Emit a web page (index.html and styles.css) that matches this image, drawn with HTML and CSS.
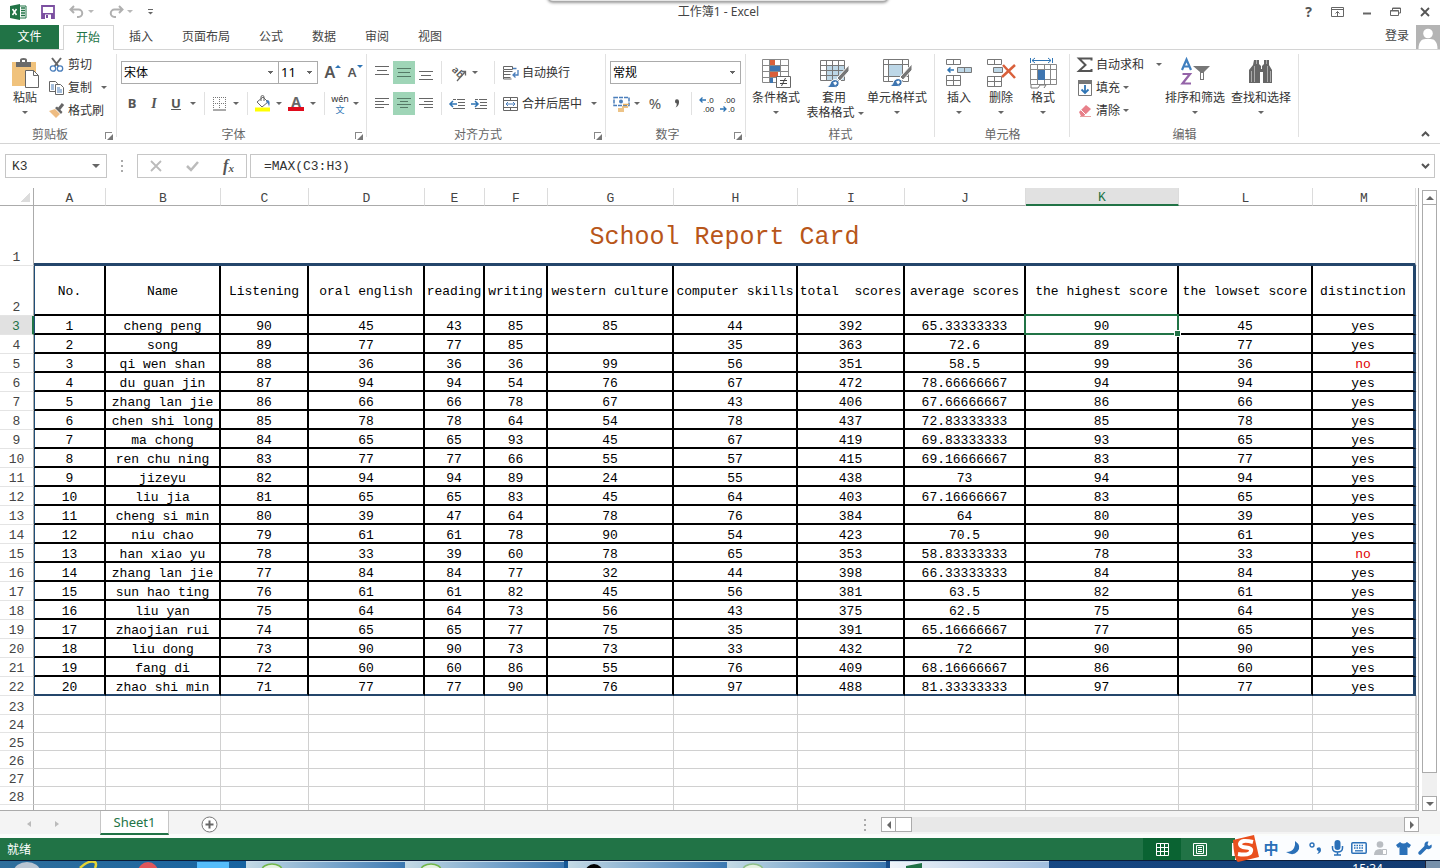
FILE: index.html
```html
<!DOCTYPE html>
<html lang="zh-CN">
<head>
<meta charset="utf-8">
<title>工作簿1 - Excel</title>
<link rel="stylesheet" href="styles.css">
</head>
<body>
<div class="app">
<header class="titlebar">
  <div class="quick">
    <svg class="app-logo" width="17" height="16" viewBox="0 0 17 16"><path d="M0 2 10 0v16L0 14z" fill="#217346"/><path d="M10 2h6v12h-6" fill="#fff" stroke="#217346"/><path d="M11 4h4M11 6.500h4M11 9h4M11 11.500h4" stroke="#217346" stroke-width="1.400"/><path d="m2.500 5 4 6M6.500 5l-4 6" stroke="#fff" stroke-width="1.500"/></svg>
    <button aria-label="保存"><svg width="14" height="14" viewBox="0 0 14 14"><path d="M1 1h12v12H1z" fill="#fff" stroke="#7b4fa0" stroke-width="1.800"/><path d="M1 8h12v5H1z" fill="#7b4fa0"/><path d="M4 9.500h6V14H4z" fill="#fff"/><path d="M5 10h2v3H5z" fill="#7b4fa0"/></svg></button>
    <button class="split" aria-label="撤消"><svg width="16" height="14" viewBox="0 0 16 14"><path d="M5 1 1.500 4.500 5 8M2 4.500h7.500a3.700 3.700 0 0 1 0 7.500H8" fill="none" stroke="#b0b0b0" stroke-width="2"/></svg><i class="caret pale"></i></button>
    <button class="split" aria-label="恢复"><svg width="16" height="14" viewBox="0 0 16 14"><path d="M11 1l3.500 3.500L11 8M14 4.500H6.500a3.700 3.700 0 0 0 0 7.500H8" fill="none" stroke="#b0b0b0" stroke-width="2"/></svg><i class="caret pale"></i></button>
    <button aria-label="自定义快速访问工具栏"><svg width="7" height="6" viewBox="0 0 7 6"><path d="M1 .5h5" stroke="#666"/><path d="M1 3h5L3.500 5.500z" fill="#666"/></svg></button>
  </div>
  <h1>工作簿1 - Excel</h1>
  <div class="window-buttons">
    <button class="help" aria-label="帮助">?</button>
    <button aria-label="功能区显示选项"><svg width="13" height="10" viewBox="0 0 13 10"><path d="M.5.5h12v9H.5zM.5 2.500h12M6.500 9V4.500M4.500 6.500l2-2 2 2" fill="none" stroke="#666"/></svg></button>
    <button aria-label="最小化"><svg width="10" height="10" viewBox="0 0 10 10"><path d="M1 6.500h8" stroke="#666" stroke-width="2"/></svg></button>
    <button aria-label="还原"><svg width="11" height="10" viewBox="0 0 11 10"><path d="M2.500 3V1h8v5h-2M.5 3.500h8v5h-8zM.5 4h8M2.500 1.500h8" fill="none" stroke="#666"/></svg></button>
    <button aria-label="关闭"><svg width="10" height="10" viewBox="0 0 10 10"><path d="m1 1 8 8M9 1 1 9" stroke="#555" stroke-width="1.800"/></svg></button>
  </div>
  <div class="drawer"></div>
</header>

<nav class="tabs">
  <button class="file">文件</button>
  <button class="active">开始</button>
  <button>插入</button>
  <button>页面布局</button>
  <button>公式</button>
  <button>数据</button>
  <button>审阅</button>
  <button>视图</button>
  <a class="login" href="#login">登录</a>
  <svg class="avatar" width="24" height="24" viewBox="0 0 24 24"><path d="M0 0h24v24H0z" fill="#b4b4b4"/><circle cx="12" cy="8.500" r="4.800" fill="#fff"/><path d="M2.500 24c0-7 3-10 7-10h5c4 0 7 3 7 10z" fill="#fff"/></svg>
</nav>

<section class="ribbon">
  <div class="group clipboard">
    <div class="body">
      <button class="big"><svg width="30" height="32" viewBox="0 0 30 32"><path d="M2 4h24v24H2z" fill="#f0c27c"/><path d="M6 4h4V2q0-2 3.500-2T17 2v2h4v5H6z" fill="#6a6a6a"/><path d="M12 2h3v2h-3z" fill="#fff"/><path d="M15.500 12.500h8l5 5v12h-13z" fill="#fff" stroke="#666"/><path d="M23.500 12.500v5h5" fill="none" stroke="#666"/></svg>粘贴<i class="caret"></i></button>
      <div class="stack">
        <button><svg width="16" height="16" viewBox="0 0 16 16"><path d="m3 1 7 9M12 1 5 10" stroke="#666" stroke-width="2"/><circle cx="4" cy="11.500" r="2.700" fill="#fff" stroke="#4a7ebb" stroke-width="1.300"/><circle cx="11" cy="11.500" r="2.700" fill="#fff" stroke="#4a7ebb" stroke-width="1.300"/></svg>剪切</button>
        <button class="spread"><svg width="16" height="16" viewBox="0 0 16 16"><path d="M.5 1.500h6l2 2v8h-8z" fill="#fff" stroke="#666"/><path d="M6.500 4.500h5l3 3v7h-8z" fill="#fff" stroke="#666"/><path d="M2 5h3M2 7h3M2 9h3M8 8h3M8 10h5M8 12h5" stroke="#4a7ebb"/></svg>复制<i class="caret"></i></button>
        <button><svg width="16" height="16" viewBox="0 0 16 16"><path d="m0 8 6-2 5 5-4 4z" fill="#eebc82"/><path d="m6 5 6 6 1.500-2L8 3.500z" fill="#666"/><path d="m10 6 4-5" stroke="#666" stroke-width="3"/></svg>格式刷</button>
      </div>
    </div>
    <div class="caption">剪贴板<button class="launcher" aria-label="剪贴板选项"></button></div>
  </div>

  <div class="group font">
    <div class="body rows">
      <div class="row">
        <select class="font-name" aria-label="字体"><option>宋体</option></select>
        <select class="font-size" aria-label="字号"><option>11</option></select>
        <button class="w22 letter grow" aria-label="增大字号">A<i class="up"></i></button>
        <button class="w22 letter shrink" aria-label="减小字号">A<i class="down"></i></button>
      </div>
      <div class="row">
        <button class="w22 letter" aria-label="加粗"><b>B</b></button>
        <button class="w22 letter" aria-label="倾斜"><em>I</em></button>
        <button class="w22 letter" aria-label="下划线"><u>U</u></button>
        <button class="w12" aria-label="下划线样式"><i class="caret"></i></button>
        <span class="sep"></span>
        <button class="w20" aria-label="边框"><svg width="14" height="14" viewBox="0 0 14 14"><path d="M.5 0v12M6.500 0v12M12.500 0v12M0 .5h13M0 6.500h13" stroke="#777" stroke-dasharray="1 1"/><path d="M0 13h13" stroke="#555"/></svg></button>
        <button class="w12" aria-label="边框样式"><i class="caret"></i></button>
        <span class="sep"></span>
        <button class="w20" aria-label="填充颜色"><svg width="18" height="17" viewBox="0 0 18 17"><path d="m3 7 6-5 5 5-6 5z" fill="#fff" stroke="#666"/><path d="M7 6V2q0-1.500 1.500-1.500T10 2v4" fill="none" stroke="#666"/><path d="M13 5q4 0 2 7-.500-4-3-5z" fill="#4a7ebb"/><path d="M1 12.500h15v4H1z" fill="#ff0"/></svg></button>
        <button class="w12" aria-label="更多填充颜色"><i class="caret"></i></button>
        <button class="w22 font-color" aria-label="字体颜色">A</button>
        <button class="w12" aria-label="更多字体颜色"><i class="caret"></i></button>
        <span class="sep"></span>
        <button class="w20 pinyin" aria-label="拼音"><span>wén</span><span>文</span></button>
        <button class="w12" aria-label="拼音选项"><i class="caret"></i></button>
      </div>
    </div>
    <div class="caption">字体<button class="launcher" aria-label="字体选项"></button></div>
  </div>

  <div class="group align">
    <div class="body rows">
      <div class="row">
        <button class="w22" aria-label="顶端对齐"><svg width="15" height="14" viewBox="0 0 15 14"><path d="M0 .5h14M2 4.500h10M0 8.500h14" stroke="#666"/></svg></button>
        <button class="w22 on" aria-label="垂直居中"><svg width="15" height="14" viewBox="0 0 15 14"><path d="M0 2.500h14M1 6.500h12M0 10.500h14" stroke="#557a66"/></svg></button>
        <button class="w22" aria-label="底端对齐"><svg width="15" height="14" viewBox="0 0 15 14"><path d="M0 5.500h14M2 9.500h10M0 13.500h14" stroke="#666"/></svg></button>
        <span class="sep narrow"></span>
        <button class="w44" aria-label="方向"><svg width="18" height="18" viewBox="0 0 18 18"><text class="tilt" x="1" y="7" transform="rotate(45 2 7)">ab</text><path d="m7 17 8-9M11.500 7.500H15.500V11.500" fill="none" stroke="#666" stroke-width="1.300"/></svg><i class="caret"></i></button>
        <span class="sep narrow"></span>
        <button class="wide"><svg width="16" height="16" viewBox="0 0 16 16"><path d="M.5 1.500h9v3h-9zM.5 6.500h9M.5 9.500h7M.5 12.500h7M.5 5v9h8" fill="none" stroke="#666"/><path d="M10 3.500h3.500M15 5v5H10M12.500 7.500 10 10l2.500 2.500" fill="none" stroke="#4a7ebb" stroke-width="1.300"/></svg>自动换行</button>
      </div>
      <div class="row">
        <button class="w22" aria-label="左对齐"><svg width="15" height="14" viewBox="0 0 15 14"><path d="M0 1.500h14M0 4.500h9M0 7.500h14M0 10.500h9" stroke="#666"/></svg></button>
        <button class="w22 on" aria-label="居中"><svg width="15" height="14" viewBox="0 0 15 14"><path d="M0 1.500h14M3 4.500h8M0 7.500h14M3 10.500h8" stroke="#557a66"/></svg></button>
        <button class="w22" aria-label="右对齐"><svg width="15" height="14" viewBox="0 0 15 14"><path d="M0 1.500h14M5 4.500h9M0 7.500h14M5 10.500h9" stroke="#666"/></svg></button>
        <span class="sep narrow"></span>
        <button class="w22" aria-label="减少缩进"><svg width="16" height="12" viewBox="0 0 16 12"><path d="M8 1.500h8M9 4.500h7M9 7.500h7M4 10.500h12M4 1.500h3" stroke="#666"/><path d="M8 6H1M4 3 1 6l3 3" fill="none" stroke="#2f75b5" stroke-width="1.500"/></svg></button>
        <button class="w22" aria-label="增加缩进"><svg width="16" height="12" viewBox="0 0 16 12"><path d="M8 1.500h8M9 4.500h7M9 7.500h7M4 10.500h12M4 1.500h3" stroke="#666"/><path d="M0 6h7M4 3l3 3-3 3" fill="none" stroke="#2f75b5" stroke-width="1.500"/></svg></button>
        <span class="sep narrow"></span>
        <button class="wide"><svg width="16" height="16" viewBox="0 0 16 16"><path d="M.5 1.500h14v13H.5zM.5 4.500h14M.5 11.500h14M7.500 1.500v3M7.500 11.500v3" fill="none" stroke="#666"/><path d="M3 8h9M5 6 3 8l2 2M10 6l2 2-2 2" fill="none" stroke="#4a7ebb"/></svg>合并后居中<i class="caret far"></i></button>
      </div>
    </div>
    <div class="caption">对齐方式<button class="launcher" aria-label="对齐选项"></button></div>
  </div>

  <div class="group number">
    <div class="body rows">
      <div class="row"><select class="format" aria-label="数字格式"><option>常规</option></select></div>
      <div class="row">
        <button class="w22" aria-label="会计数字格式"><svg width="17" height="16" viewBox="0 0 17 16"><path d="M1 1.500h15v8H1z" fill="#fff" stroke="#4a7ebb" stroke-width="1.500" stroke-dasharray="4 1"/><circle cx="8" cy="5.500" r="2" fill="#4a7ebb"/><path d="M10 8.500h6M9 11h6M5 13h6M5 15h6" stroke="#e8b060" stroke-width="1.500"/></svg></button>
        <button class="w10" aria-label="货币符号"><i class="caret"></i></button>
        <button class="w26 percent" aria-label="百分比样式">%</button>
        <button class="w18" aria-label="千位分隔样式"><svg width="6" height="9" viewBox="0 0 6 9"><path d="M1 2.500a2 2 0 0 1 4-.3Q5.500 6.500 1.500 8.500q1.500-2 1.300-4Q1 4.300 1 2.500z" fill="#555"/></svg></button>
        <span class="sep"></span>
        <button class="w20" aria-label="增加小数位数"><svg width="16" height="20" viewBox="0 0 16 20"><path d="M7 6H1M3.500 3.500 1 6l2.500 2.500" fill="none" stroke="#2f75b5" stroke-width="1.300"/><text class="digits" x="8" y="9">.0</text><text class="digits" x="4" y="18">.00</text></svg></button>
        <button class="w22" aria-label="减少小数位数"><svg width="16" height="20" viewBox="0 0 16 20"><path d="M0 15h6M3.500 12.500 6 15l-2.500 2.500" fill="none" stroke="#2f75b5" stroke-width="1.300"/><text class="digits" x="4" y="9">.00</text><text class="digits" x="8" y="18">.0</text></svg></button>
      </div>
    </div>
    <div class="caption">数字<button class="launcher" aria-label="数字选项"></button></div>
  </div>

  <div class="group styles">
    <div class="body">
      <button class="big w56"><svg width="30" height="32" viewBox="0 0 30 32"><path d="M1.500 1.500h26v23h-26zM1.500 7.500h26M1.500 13.500h26M1.500 19.500h26M8.500 1.500v23M19.500 1.500v23" fill="#fff" stroke="#888"/><path d="M9 2h5v5H9z" fill="#d9603b"/><path d="M9 8h10v5H9z" fill="#3e75b0"/><path d="M9 14h8v5H9z" fill="#d9603b"/><path d="M9 20h3v5H9z" fill="#3e75b0"/><path d="M15.500 18.500h14v11h-14z" fill="#fff" stroke="#666"/><path d="M19 22.500h7M19 25.500h7M24.500 20l-4 8" stroke="#444"/></svg>条件格式<i class="caret"></i></button>
      <button class="big w60"><svg width="30" height="32" viewBox="0 0 30 32"><path d="M1.500 2.500h24v20h-24z" fill="#fff"/><path d="M8 8h17v14H8z" fill="#bdd7e7"/><path d="M1.500 2.500h24v20h-24zM1.500 7.500h24M1.500 12.500h24M1.500 17.500h24M7.500 2.500v20M13.500 2.500v20M19.500 2.500v20" fill="none" stroke="#777"/><path d="m18 20 12-13v6l-9 10z" fill="#777" stroke="#fff"/><path d="M8 29.500q3-2 4-6 4-4 8 0 1 6-5 6z" fill="#3e75b0" stroke="#fff"/><path d="m14 24.500 3-1 1 2-2 2z" fill="#fff"/></svg>套用<span>表格格式 <i class="caret"></i></span></button>
      <button class="big w66"><svg width="30" height="32" viewBox="0 0 30 32"><path d="M1.500 1.500h25v22h-25zM1.500 6.500h25M1.500 18.500h25M6.500 1.500v22M20.500 1.500v22" fill="#fff" stroke="#777"/><path d="M7 7h13v11H7z" fill="#bdd7e7"/><path d="m18 19 12-13v6l-9 10z" fill="#777" stroke="#fff"/><path d="M8 28.500q3-2 4-6 4-4 8 0 1 6-5 6z" fill="#3e75b0" stroke="#fff"/><path d="m14 23.500 3-1 1 2-2 2z" fill="#fff"/></svg>单元格样式<i class="caret"></i></button>
    </div>
    <div class="caption">样式</div>
  </div>

  <div class="group cells">
    <div class="body">
      <button class="big w42"><svg width="28" height="32" viewBox="0 0 28 32"><path d="M1.500 1.500h14v5h-14zM8.500 1.500v5M1.500 17.500h14v10h-14zM8.500 17.500v10M1.500 22.500h14" fill="#fff" stroke="#777"/><path d="M12.500 9.500h14v5h-14zM19.500 9.500v5" fill="#bdd7e7" stroke="#777"/><path d="M9 12H3M5.500 9.500 3 12l2.500 2.500" fill="none" stroke="#2f75b5" stroke-width="1.500"/></svg>插入<i class="caret"></i></button>
      <button class="big w42"><svg width="30" height="32" viewBox="0 0 30 32"><path d="M1.500 1.500h14v5h-14zM8.500 1.500v5M1.500 18.500h14v10h-14zM8.500 18.500v10M1.500 23.500h14" fill="#fff" stroke="#777"/><path d="M7.500 9.500h9v5h-9z" fill="#bdd7e7" stroke="#777"/><path d="m17 7 12 13M29 7 16 19" stroke="#d9603b" stroke-width="2.500"/></svg>删除<i class="caret"></i></button>
      <button class="big w42"><svg width="29" height="32" viewBox="0 0 29 32"><path d="M1.500 0v5M23.500 0v5M3 2.500h19M6 0 3 2.500 6 5M19 0l3 2.500L19 5" fill="none" stroke="#2f75b5"/><path d="M1.500 6.500h26v20h-26zM1.500 11.500h26M1.500 21.500h26M8.500 6.500v20M15.500 6.500v20M21.500 6.500v20" fill="#fff" stroke="#888"/><path d="M9 12h7v10H9z" fill="#3e75b0"/><path d="M2 27v3h7l2-3h6l-2 3" fill="#fff" stroke="#777"/></svg>格式<i class="caret"></i></button>
    </div>
    <div class="caption">单元格</div>
  </div>

  <div class="group editing">
    <div class="body">
      <div class="stack">
        <button class="spread"><svg width="16" height="16" viewBox="0 0 16 16"><path d="M14.500 3.500V1.500H2L8.500 8 2 14h12.500v-2" fill="none" stroke="#555" stroke-width="2"/></svg>自动求和<i class="caret"></i></button>
        <button><svg width="16" height="16" viewBox="0 0 16 16"><path d="M1.500.5h13v15h-13z" fill="#fff" stroke="#777"/><path d="M1 0h14v4H1z" fill="#777"/><path d="M8 5v8M4.500 9.500 8 13l3.500-3.500" fill="none" stroke="#2f75b5" stroke-width="1.800"/></svg>填充<i class="caret"></i></button>
        <button><svg width="16" height="16" viewBox="0 0 16 16"><path d="m2 9 7-7 5 4-7 7H4z" fill="#e8808a"/><path d="m4 7 5 5" stroke="#fff"/><path d="M3 13.500h11" stroke="#e8a0a0"/></svg>清除<i class="caret"></i></button>
      </div>
      <button class="big w66"><svg width="30" height="32" viewBox="0 0 30 32"><path d="m2 12 4.500-10.500L11 12M3.500 8.500h6" fill="none" stroke="#3f7fbf" stroke-width="2.200"/><path d="M2.500 16h7.500l-7.500 9.500h8.500" fill="none" stroke="#9463a8" stroke-width="2.200"/><path d="M13 8h17l-6 6v8h-4v-8z" fill="#777"/><path d="M22 15v6" stroke="#fff" stroke-width="2"/></svg>排序和筛选<i class="caret"></i></button>
      <button class="big w66"><svg width="28" height="32" viewBox="0 0 28 32"><path d="M7 2h5v4l2 2v3h1V8l2-2V2h5v5l3 5v13h-9V14h-3v11H2V12l4-5z" fill="#666"/><path d="M4.500 13v11M7.500 8v16M20.500 8v16M23.500 13v11M9.500 2v4M19.500 2v4" stroke="#aaa"/></svg>查找和选择<i class="caret"></i></button>
    </div>
    <div class="caption">编辑</div>
  </div>
  <button class="collapse" aria-label="折叠功能区"><svg width="9" height="6" viewBox="0 0 9 6"><path d="m1 5 3.500-3.500L8 5" fill="none" stroke="#555" stroke-width="2"/></svg></button>
</section>

<section class="formula-bar">
  <div class="name-box"><input aria-label="名称框" value="K3"><button aria-label="名称列表"><i class="caret large"></i></button></div>
  <span class="grip"></span>
  <div class="fx">
    <button aria-label="取消"><svg width="12" height="12" viewBox="0 0 12 12"><path d="m1 1 10 10M11 1 1 11" stroke="#bbb" stroke-width="1.800"/></svg></button>
    <button aria-label="输入"><svg width="13" height="12" viewBox="0 0 13 12"><path d="m1 6 4 4 7-8" fill="none" stroke="#bbb" stroke-width="2.500"/></svg></button>
    <button class="fn" aria-label="插入函数">f<small>x</small></button>
  </div>
  <div class="formula"><input aria-label="编辑栏" value="=MAX(C3:H3)"><button aria-label="展开编辑栏"><svg width="9" height="6" viewBox="0 0 9 6"><path d="m1 1 3.500 3.500L8 1" fill="none" stroke="#555" stroke-width="2"/></svg></button></div>
</section>

<main class="sheet">
<div class="grid">
<table>
<colgroup><col class="c-head"><col class="c-a"><col class="c-b"><col class="c-c"><col class="c-d"><col class="c-e"><col class="c-f"><col class="c-g"><col class="c-h"><col class="c-i"><col class="c-j"><col class="c-k"><col class="c-l"><col class="c-m"><col></colgroup>
<thead><tr><th class="corner"><th>A<th>B<th>C<th>D<th>E<th>F<th>G<th>H<th>I<th>J<th class="current">K<th>L<th>M<th></tr></thead>
<tbody class="report">
<tr class="title"><th>1<td colspan="13">School Report Card<td></tr>
<tr class="fields"><th>2<td>No.<td>Name<td>Listening<td>oral english<td>reading<td>writing<td>western culture<td>computer skills<td>total&nbsp; scores<td>average scores<td>the highest score<td>the lowset score<td>distinction<td></tr>
<tr><th class="current">3<td>1<td>cheng peng<td>90<td>45<td>43<td>85<td>85<td>44<td>392<td>65.33333333<td class="cursor">90<td>45<td>yes<td></tr>
<tr><th>4<td>2<td>song<td>89<td>77<td>77<td>85<td><td>35<td>363<td>72.6<td>89<td>77<td>yes<td></tr>
<tr><th>5<td>3<td>qi wen shan<td>88<td>36<td>36<td>36<td>99<td>56<td>351<td>58.5<td>99<td>36<td class="no">no<td></tr>
<tr><th>6<td>4<td>du guan jin<td>87<td>94<td>94<td>54<td>76<td>67<td>472<td>78.66666667<td>94<td>94<td>yes<td></tr>
<tr><th>7<td>5<td>zhang lan jie<td>86<td>66<td>66<td>78<td>67<td>43<td>406<td>67.66666667<td>86<td>66<td>yes<td></tr>
<tr><th>8<td>6<td>chen shi long<td>85<td>78<td>78<td>64<td>54<td>78<td>437<td>72.83333333<td>85<td>78<td>yes<td></tr>
<tr><th>9<td>7<td>ma chong<td>84<td>65<td>65<td>93<td>45<td>67<td>419<td>69.83333333<td>93<td>65<td>yes<td></tr>
<tr><th>10<td>8<td>ren chu ning<td>83<td>77<td>77<td>66<td>55<td>57<td>415<td>69.16666667<td>83<td>77<td>yes<td></tr>
<tr><th>11<td>9<td>jizeyu<td>82<td>94<td>94<td>89<td>24<td>55<td>438<td>73<td>94<td>94<td>yes<td></tr>
<tr><th>12<td>10<td>liu jia<td>81<td>65<td>65<td>83<td>45<td>64<td>403<td>67.16666667<td>83<td>65<td>yes<td></tr>
<tr><th>13<td>11<td>cheng si min<td>80<td>39<td>47<td>64<td>78<td>76<td>384<td>64<td>80<td>39<td>yes<td></tr>
<tr><th>14<td>12<td>niu chao<td>79<td>61<td>61<td>78<td>90<td>54<td>423<td>70.5<td>90<td>61<td>yes<td></tr>
<tr><th>15<td>13<td>han xiao yu<td>78<td>33<td>39<td>60<td>78<td>65<td>353<td>58.83333333<td>78<td>33<td class="no">no<td></tr>
<tr><th>16<td>14<td>zhang lan jie<td>77<td>84<td>84<td>77<td>32<td>44<td>398<td>66.33333333<td>84<td>84<td>yes<td></tr>
<tr><th>17<td>15<td>sun hao ting<td>76<td>61<td>61<td>82<td>45<td>56<td>381<td>63.5<td>82<td>61<td>yes<td></tr>
<tr><th>18<td>16<td>liu yan<td>75<td>64<td>64<td>73<td>56<td>43<td>375<td>62.5<td>75<td>64<td>yes<td></tr>
<tr><th>19<td>17<td>zhaojian rui<td>74<td>65<td>65<td>77<td>75<td>35<td>391<td>65.16666667<td>77<td>65<td>yes<td></tr>
<tr><th>20<td>18<td>liu dong<td>73<td>90<td>90<td>73<td>73<td>33<td>432<td>72<td>90<td>90<td>yes<td></tr>
<tr><th>21<td>19<td>fang di<td>72<td>60<td>60<td>86<td>55<td>76<td>409<td>68.16666667<td>86<td>60<td>yes<td></tr>
<tr><th>22<td>20<td>zhao shi min<td>71<td>77<td>77<td>90<td>76<td>97<td>488<td>81.33333333<td>97<td>77<td>yes<td></tr>
</tbody>
<tbody class="blank">
<tr><th>23<td><td><td><td><td><td><td><td><td><td><td><td><td><td><td></tr>
<tr><th>24<td><td><td><td><td><td><td><td><td><td><td><td><td><td><td></tr>
<tr><th>25<td><td><td><td><td><td><td><td><td><td><td><td><td><td><td></tr>
<tr><th>26<td><td><td><td><td><td><td><td><td><td><td><td><td><td><td></tr>
<tr><th>27<td><td><td><td><td><td><td><td><td><td><td><td><td><td><td></tr>
<tr><th>28<td><td><td><td><td><td><td><td><td><td><td><td><td><td><td></tr>
<tr><th><td><td><td><td><td><td><td><td><td><td><td><td><td><td><td></tr>
</tbody>
</table>
</div>
<div class="vscroll">
  <button aria-label="向上滚动"><i class="tri up"></i></button>
  <div class="thumb"></div>
  <div class="track"></div>
  <button aria-label="向下滚动"><i class="tri down"></i></button>
</div>
</main>

<section class="sheet-tabs">
  <button class="nav" aria-label="上一张工作表"><i class="tri left"></i></button>
  <button class="nav" aria-label="下一张工作表"><i class="tri right"></i></button>
  <button class="sheet-tab">Sheet1</button>
  <button class="add" aria-label="新工作表"><svg width="17" height="17" viewBox="0 0 17 17"><circle cx="8.500" cy="8.500" r="7.500" fill="#fff" stroke="#777"/><path d="M8.500 4.500v8M4.500 8.500h8" stroke="#666" stroke-width="2"/></svg></button>
  <span class="grip"></span>
  <div class="hscroll">
    <button aria-label="向左滚动"><i class="tri left"></i></button>
    <div class="thumb"></div>
    <div class="track"></div>
    <button aria-label="向右滚动"><i class="tri right"></i></button>
  </div>
</section>

<footer class="status">
  <span>就绪</span>
  <div class="views">
    <button class="on" aria-label="普通"><svg width="13" height="13" viewBox="0 0 13 13"><path d="M.5.5h12v12H.5zM.5 4.500h12M.5 8.500h12M4.500.5v12M8.500.5v12" fill="none" stroke="#fff"/></svg></button>
    <button aria-label="页面布局"><svg width="14" height="13" viewBox="0 0 14 13"><path d="M.5.5h13v12H.5zM3.500 2.500h7v8h-7zM5 4.500h4M5 6.500h4M5 8.500h4" fill="none" stroke="#fff"/></svg></button>
    <button aria-label="分页预览"><svg width="13" height="13" viewBox="0 0 13 13"><path d="M0 0h13v13H0z" fill="#fff"/></svg></button>
  </div>
</footer>

<div class="taskbar">
  <div class="launch">
    <svg width="26" height="7" viewBox="0 0 26 7"><ellipse cx="13" cy="10" rx="13" ry="9" fill="#b9c5d2"/></svg>
    <svg width="20" height="7" viewBox="0 0 20 7"><path d="M2 7Q10-1 17 1q2 2 0 6" fill="none" stroke="#e6d534" stroke-width="2.500"/></svg>
    <svg width="22" height="7" viewBox="0 0 22 7"><circle cx="11" cy="11" r="10" fill="#e0565a"/></svg>
    <svg width="32" height="7" viewBox="0 0 32 7"><path d="M0 1h32v6H0z" fill="#55bdfb"/></svg>
  </div>
  <div class="task"><svg width="24" height="7" viewBox="0 0 24 7"><ellipse cx="12" cy="8" rx="10" ry="6" fill="#e6f2e2" stroke="#72b84a" stroke-width="1.500"/></svg></div>
  <div class="task"><svg width="24" height="7" viewBox="0 0 24 7"><ellipse cx="12" cy="8" rx="10" ry="6" fill="#e6f2e2" stroke="#72b84a" stroke-width="1.500"/></svg></div>
  <div class="task first"><svg width="24" height="7" viewBox="0 0 24 7"><circle cx="12" cy="11" r="9"/></svg></div>
  <div class="task"><svg width="24" height="7" viewBox="0 0 24 7"><ellipse cx="12" cy="8" rx="10" ry="6" fill="#e6f2e2" stroke="#8fc08a" stroke-width="1.500"/></svg></div>
  <div class="task first light"><svg width="24" height="7" viewBox="0 0 24 7"><path d="m2 4 16-3v6H2z" fill="#1f7145"/></svg></div>
  <time>15:34</time>
  <span class="desktop"></span>
</div>

<div class="ime">
  <svg class="sogou" width="27" height="27" viewBox="0 0 27 27"><path d="M1 5 22 0l5 22-21 5Q2 25 1 5z" fill="#e9501e"/><path d="M21 7Q9 4 8 9q0 3 6 3.500t5 3.500q-1 5-13 3" fill="none" stroke="#fff" stroke-width="4"/></svg>
  <button>中</button>
  <button aria-label="半角"><svg width="14" height="14" viewBox="0 0 14 14"><path d="M9 0q7 5 2.500 10.500Q7 15.500 0 11q6 0 8-4 1.500-3 1-7z" fill="#2a70b8"/></svg></button>
  <button aria-label="中文标点"><svg width="13" height="12" viewBox="0 0 13 12"><circle cx="3" cy="3" r="2" fill="none" stroke="#2a70b8" stroke-width="1.400"/><path d="M8 6q4-2 4 2 0 3-4 4 2-2 1.500-3Q7 8 8 6z" fill="#2a70b8"/></svg></button>
  <button aria-label="语音"><svg width="13" height="16" viewBox="0 0 13 16"><rect x="3.500" width="6" height="10" rx="3" fill="#2a70b8"/><path d="M1.500 6v2q0 4 5 4t5-4V6M6.500 12v3M3 15h7" fill="none" stroke="#2a70b8" stroke-width="1.500"/></svg></button>
  <button aria-label="软键盘"><svg width="16" height="12" viewBox="0 0 16 12"><rect x=".8" y=".8" width="14.400" height="10.400" rx="1" fill="none" stroke="#2a70b8" stroke-width="1.500"/><path d="M3 3.500h10M3 6h10" stroke="#2a70b8" stroke-width="1.500" stroke-dasharray="1.500 1"/><path d="M4 8.800h8" stroke="#2a70b8" stroke-width="1.300"/></svg></button>
  <button aria-label="账户"><svg width="14" height="15" viewBox="0 0 14 15"><circle cx="6" cy="3.500" r="3.300" fill="#b9bdc2"/><path d="M0 14q0-6 6-6t6 6z" fill="#b9bdc2"/><path d="M8.500 8.500h4v5h-4z" fill="#fff" stroke="#b9bdc2"/></svg></button>
  <button aria-label="皮肤"><svg width="15" height="13" viewBox="0 0 15 13"><path d="M4 0q3.500 3 7 0l4 3-2 3-1.500-1v8h-8V5L2 6 0 3z" fill="#2a70b8"/></svg></button>
  <button aria-label="工具"><svg width="15" height="14" viewBox="0 0 15 14"><path d="m2 12 6-6" stroke="#2a70b8" stroke-width="3.500" stroke-linecap="round"/><path d="M13.500 3.500 11 5 9.500 3.500l1-3Q6 0 6.500 5q1.500 4 5 3 3-1 2-4.500z" fill="#2a70b8"/></svg></button>
</div>
</div>
</body>
</html>
```
FILE: styles.css
```css
* { box-sizing: border-box; }
body {
  margin: 0;
  font: 12px/15px "Noto Sans", "Noto Sans CJK SC", sans-serif;
  color: #333;
  background: #fff;
}
button {
  margin: 0;
  padding: 0;
  border: 0;
  background: none;
  font: inherit;
  color: inherit;
  display: flex;
  align-items: center;
  justify-content: center;
  white-space: nowrap;
}
input { font: inherit; color: inherit; border: 0; padding: 0; background: none; min-width: 0; }
svg { display: block; flex: none; overflow: visible; }
.app {
  position: relative;
  height: 100vh;
  display: flex;
  flex-direction: column;
  overflow: hidden;
}
.app > * { flex: none; }
.caret {
  flex: none;
  display: inline-block;
  border: 3px solid transparent;
  border-top-color: #666;
  border-bottom: 0;
}
.caret.pale { border-top-color: #b8b8b8; }
.caret.large { border-width: 4px 4px 0; }

/* Title bar */
.titlebar {
  position: relative;
  height: 25px;
  display: flex;
  align-items: center;
  justify-content: space-between;
}
.quick { flex: 1; display: flex; align-items: center; gap: 14px; padding: 0 0 2px 10px; }
.quick .split { gap: 3px; }
.titlebar h1 { margin: 0 12px 2px 0; font-size: 12px; font-weight: 400; color: #444; }
.window-buttons { flex: 1; display: flex; justify-content: flex-end; padding: 0 1px 2px 0; }
.window-buttons button { width: 29px; height: 22px; }
.window-buttons .help { font-size: 14px; font-weight: 700; color: #555; }
.drawer {
  position: absolute;
  left: 38%;
  width: 342px;
  top: -8px;
  height: 10px;
  border-radius: 0 0 6px 6px;
  background: #e6e6e6;
  border: 1px solid #aaa;
  box-shadow: 0 1px 3px #999;
}

/* Ribbon tabs */
.tabs { height: 25px; display: flex; gap: 1px; border-bottom: 1px solid #d4d4d4; }
.tabs button { padding: 0 14px 1px; color: #444; }
.tabs .file { width: 59px; background: #217346; color: #fff; margin-right: 3px; }
.tabs .active {
  height: 25px;
  padding: 0 13px 2px 12px;
  border: 1px solid #d4d4d4;
  border-bottom: 0;
  background: #fff;
  color: #217346;
}
.login { margin-left: auto; padding: 3px 6px; color: #444; text-decoration: none; }
.avatar { width: 24px; }

/* Ribbon */
.ribbon {
  position: relative;
  height: 94px;
  display: flex;
  border-bottom: 1px solid #d4d4d4;
}
.group { position: relative; flex: none; }
.group::after {
  content: "";
  position: absolute;
  right: 0;
  top: 4px;
  bottom: 6px;
  border-right: 1px solid #e1e1e1;
}
.group .body { height: 77px; display: flex; padding-top: 3px; }
.group .rows { flex-direction: column; padding-top: 11px; gap: 8px; }
.row { display: flex; height: 23px; }
.caption { position: relative; text-align: center; color: #666; height: 16px; }
.clipboard { width: 117px; }
.font { width: 250px; }
.align { width: 239px; }
.number { width: 140px; }
.styles { width: 189px; }
.cells { width: 135px; }
.editing { width: 229px; }
.clipboard .caption, .font .caption, .align .caption, .number .caption { padding-right: 17px; }
.clipboard .body { padding-left: 8px; }
.font .body { padding-left: 4px; }
.align .body, .number .body { padding-left: 4px; }
.styles .body { padding-left: 2px; }
.cells .body { padding-left: 3px; }
.editing .body { padding-left: 7px; }
.launcher {
  position: absolute;
  right: 5px;
  top: 5px;
  width: 7px;
  height: 7px;
  border-left: 1px solid #888;
  border-top: 1px solid #888;
}
.launcher::after {
  content: "";
  position: absolute;
  right: -1px;
  bottom: -1px;
  border: 3px solid transparent;
  border-right-color: #777;
  border-bottom-color: #777;
}
.big { flex-direction: column; justify-content: flex-start; padding-top: 5px; width: 34px; }
.big > .caret { margin-top: 6px; }
.big span { white-space: nowrap; padding-left: 2px; }
.big span .caret { margin-bottom: 2px; }
.stack { display: flex; flex-direction: column; margin-left: 7px; }
.stack button { height: 23px; gap: 3px; justify-content: flex-start; }
.stack .spread .caret { margin-left: auto; }
.clipboard .stack { width: 58px; }
.editing .stack { width: 85px; margin-left: 0; }
.w10 { width: 10px; }
.w12 { width: 12px; }
.w18 { width: 18px; }
.w20 { width: 20px; }
.w22 { width: 22px; }
.w26 { width: 26px; }
.w42 { width: 42px; }
.w44 { width: 44px; gap: 4px; padding-right: 8px; }
.w56 { width: 56px; }
.w60 { width: 60px; }
.w66 { width: 66px; }
.on { background: #9fd5b7; }
.sep { width: 11px; border-left: 1px solid #e1e1e1; margin-left: 5px; margin-right: -5px; }
.sep.narrow { width: 9px; margin-left: 4px; margin-right: -4px; }
.wide { margin-left: 4px; gap: 3px; }
.wide .far { margin-left: 6px; }
select {
  height: 23px;
  margin: 0;
  padding: 0 0 0 2px;
  border: 1px solid #ababab;
  border-radius: 0;
  appearance: none;
  font: inherit;
  color: #000;
  background:
    linear-gradient(#666, #666) right 5px top 9px / 5px 1px no-repeat,
    linear-gradient(#666, #666) right 6px top 10px / 3px 1px no-repeat,
    linear-gradient(#666, #666) right 7px top 11px / 1px 1px no-repeat,
    #fff;
}
.font-name { width: 158px; }
.font-size { width: 40px; margin-left: -1px; font-size: 13px; }
.format { width: 131px; }
.letter { position: relative; font-size: 13px; color: #555; }
.letter em { font-family: "Liberation Serif", serif; font-weight: 700; font-size: 14px; }
.letter u { font-weight: 700; }
.grow { font-size: 16px; margin-left: 2px; padding-right: 2px; font-weight: 600; }
.shrink { font-size: 13px; padding-right: 2px; font-weight: 600; }
.letter i { position: absolute; right: 1px; top: 4px; border: 3px solid transparent; }
.letter .up { border-bottom-color: #2f75b5; border-top: 0; }
.letter .down { border-top-color: #2f75b5; border-bottom: 0; }
.font-color {
  font-size: 14px;
  font-weight: 700;
  color: #666;
  background: linear-gradient(#e00b1c, #e00b1c) center bottom 4px / 16px 4px no-repeat;
  padding-bottom: 4px;
}
.pinyin { flex-direction: column; font-size: 9px; line-height: 11px; }
.pinyin span:last-child { color: #2f75b5; }
.tilt { font-size: 10px; fill: #555; font-weight: 600; }
.digits { font: 8px "Liberation Sans", sans-serif; fill: #222; }
.percent { font-size: 15px; color: #555; }
.collapse { position: absolute; right: 9px; bottom: 4px; width: 12px; height: 10px; }

/* Formula bar */
.formula-bar {
  height: 44px;
  display: flex;
  padding: 10px 5px;
  font-family: "Liberation Mono", monospace;
  font-size: 13px;
}
.name-box, .fx, .formula { display: flex; align-items: center; border: 1px solid #c6c6c6; }
.name-box { width: 102px; padding: 0 6px; }
.name-box input { flex: 1; }
.grip {
  width: 2px;
  height: 12px;
  margin: 6px 14px;
  background: repeating-linear-gradient(#aaa 0 2px, transparent 2px 5px);
}
.fx { width: 110px; justify-content: space-around; }
.fx .fn { font: italic 700 16px/20px "Liberation Serif", serif; color: #555; }
.fx small { font-size: 11px; padding-top: 4px; }
.formula { flex: 1; margin-left: 3px; padding: 0 4px 0 13px; }
.formula input { flex: 1; }

/* Worksheet */
.sheet { display: flex; }
.app > .sheet { flex: 1 1 0; min-height: 0; }
.grid {
  flex: 1;
  overflow: hidden;
  border-right: 1px solid #ababab;
  border-bottom: 1px solid #ababab;
}
table {
  width: 100%;
  table-layout: fixed;
  border-collapse: separate;
  border-spacing: 0;
  font: 13px/12px "Liberation Mono", monospace;
  color: #000;
}
.c-head { width: 34px; }
.c-a { width: 72px; }
.c-b { width: 115px; }
.c-c { width: 88px; }
.c-d { width: 116px; }
.c-e { width: 60px; }
.c-f { width: 63px; }
.c-g { width: 126px; }
.c-h { width: 124px; }
.c-i { width: 107px; }
.c-j { width: 121px; }
.c-k { width: 153px; }
.c-l { width: 134px; }
.c-m { width: 103px; }
th, td { padding: 0; text-align: center; white-space: nowrap; font-weight: 400; }
thead th {
  height: 18px;
  vertical-align: bottom;
  border-right: 1px solid #dcdcdc;
  border-bottom: 1px solid #ababab;
  color: #444;
}
thead th:last-child { border-right: 0; }
thead .corner {
  border-right-color: #ababab;
  background: linear-gradient(135deg, transparent 50%, #dcdcdc 50%) right 3px bottom 3px / 9px 9px no-repeat;
}
thead .current { background: #e1e1e1; color: #217346; border-bottom: 2px solid #217346; }
tbody th {
  border-right: 1px solid #ababab;
  border-bottom: 1px solid #e4e4e4;
  vertical-align: bottom;
  color: #444;
}
tbody th.current { background: #e1e1e1; color: #217346; border-right: 2px solid #217346; }
.report tr { height: 19px; }
.report th { line-height: 14px; }
.report td { border-right: 2px solid #000; border-bottom: 2px solid #000; vertical-align: bottom; }
.report td:nth-child(2) { border-left: 1px solid #1f4e78; }
.report td:nth-child(14) { border-right: 3px solid #24466b; }
.report td:last-child { border: 0; border-bottom: 1px solid #e4e4e4; }
.report tr:last-child td:not(:last-child) { border-bottom-color: #24466b; }
.report .title { height: 60px; }
.report .title td:nth-child(2) {
  padding-top: 7px;
  border: 0;
  border-right: 1px solid #d4d4d4;
  border-bottom: 3px solid #24466b;
  vertical-align: middle;
  font-size: 25px;
  line-height: 30px;
  color: #b8561a;
}
.report .fields { height: 50px; }
.report .fields td { padding-top: 3px; vertical-align: middle; }
.report .no { color: #e00000; }
.cursor { position: relative; }
.cursor::before { content: ""; position: absolute; inset: -2px; border: 2px solid #217346; }
.cursor::after {
  content: "";
  position: absolute;
  right: -3px;
  bottom: -3px;
  width: 5px;
  height: 5px;
  background: #217346;
  box-shadow: 0 0 0 1px #fff;
}
.blank tr { height: 18px; }
.blank tr:first-child { height: 19px; }
.blank td { border-right: 1px solid #d0d0d0; border-bottom: 1px solid #d0d0d0; }
.blank td:last-child { border-right: 0; }

/* Scroll bars */
.vscroll { width: 21px; padding: 2px 3px 0; display: flex; flex-direction: column; background: #fff; }
.vscroll button, .hscroll button { flex: none; width: 15px; height: 15px; border: 1px solid #ababab; background: #fff; }
.vscroll .thumb { flex: 1; margin-top: -1px; border: 1px solid #ababab; }
.vscroll .track { height: 23px; background: #f0f0f0; }
.tri { border: 4px solid transparent; }
.tri.up { border-bottom-color: #666; border-top: 0; }
.tri.down { border-top-color: #666; border-bottom: 0; }
.tri.left { border-right-color: #666; border-left: 0; }
.tri.right { border-left-color: #666; border-right: 0; }

/* Sheet tabs */
.sheet-tabs {
  height: 27px;
  display: flex;
  background: #f4f4f4;
  border-bottom: 4px solid #fbfdfb;
}
.nav { width: 28px; height: 26px; }
.nav:first-child { margin-left: 15px; }
.nav .tri.left { border-width: 3px 4px 3px 0; border-right-color: #bbb; }
.nav .tri.right { border-width: 3px 0 3px 4px; border-left-color: #bbb; }
.sheet-tab {
  width: 69px;
  height: 24px;
  margin-left: 29px;
  background: #fff;
  border: 1px solid #c6c6c6;
  border-top: 0;
  border-bottom: 2px solid #217346;
  color: #217346;
  font-size: 13px;
}
.add { height: 26px; margin-left: 32px; }
.sheet-tabs .grip { margin: 8px 15px 0 auto; }
.hscroll { width: 39%; display: flex; padding: 6px 21px 0 0; max-width: 559px; }
.hscroll .thumb { width: 17px; height: 15px; margin: 0 0 0 -1px; border: 1px solid #ababab; background: #fff; }
.hscroll .track { flex: 1; height: 15px; background: #e8e8e8; }

/* Status bar */
.status {
  height: 22px;
  display: flex;
  align-items: center;
  justify-content: space-between;
  padding-left: 7px;
  background: #217346;
  color: #fff;
}
.views { display: flex; align-self: stretch; padding-right: 183px; }
.views button { width: 38px; height: 22px; }
.views .on { background: #0a6332; }

/* Desktop taskbar */
.taskbar {
  height: 8px;
  display: flex;
  overflow: hidden;
  border-top: 1px solid #0c1c38;
  background: linear-gradient(90deg, #2f6f9c, #1763a0 17%, #174a86 70%, #123a70);
}
.launch { width: 246px; padding: 0 17px 0 14px; display: flex; justify-content: space-between; }
.task {
  width: 159px;
  padding-left: 14px;
  border-top: 1px solid #c8dce8;
  background: linear-gradient(100deg, #c5dbe5, #78a5cb 55%, #3b78b0);
}
.task.first { margin-left: 4px; }
.task.light { background: linear-gradient(100deg, #f0f5fa, #a0bedd); }
.taskbar time { margin-left: auto; padding-right: 42px; font-size: 12px; color: #fff; line-height: 15px; }
.desktop { width: 15px; background: #7791ab; border-left: 1px solid #223; }

/* Input method bar */
.ime {
  position: absolute;
  right: 0;
  bottom: 8px;
  height: 24px;
  width: 205px;
  display: flex;
  align-items: center;
  background: #fbfdff;
  color: #2a70b8;
}
.sogou { margin: 0 1px 0 -3px; }
.ime button { width: 22px; font-size: 15px; font-weight: 700; }
```
